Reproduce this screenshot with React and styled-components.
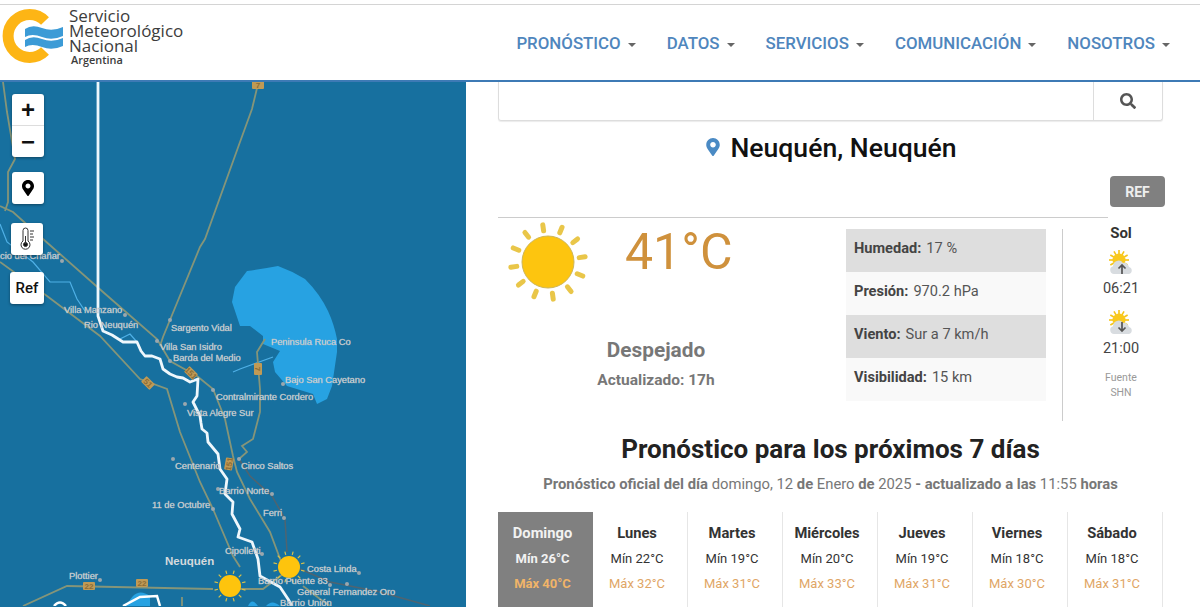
import React from "react"
import styled, { createGlobalStyle } from "styled-components"
import { FaMapMarkerAlt, FaSearch } from "react-icons/fa"

const NAV_ITEMS = ["PRONÓSTICO", "DATOS", "SERVICIOS", "COMUNICACIÓN", "NOSOTROS"]

const FORECAST = [
  { day: "Domingo", min: 26, max: 40, today: true },
  { day: "Lunes", min: 22, max: 32 },
  { day: "Martes", min: 19, max: 31 },
  { day: "Miércoles", min: 20, max: 33 },
  { day: "Jueves", min: 19, max: 31 },
  { day: "Viernes", min: 18, max: 30 },
  { day: "Sábado", min: 18, max: 31 },
]

const STATS = [
  ["Humedad:", "17 %"],
  ["Presión:", "970.2 hPa"],
  ["Viento:", "Sur a 7 km/h"],
  ["Visibilidad:", "15 km"],
]

const MAP_LABELS = [
  ["cio del Chañar", 0, 260],
  ["Villa Manzano", 64, 314],
  ["Rio Neuquén", 84, 329],
  ["Sargento Vidal", 171, 332],
  ["Villa San Isidro", 160, 351],
  ["Barda del Medio", 173, 362],
  ["Peninsula Ruca Co", 271, 346],
  ["Bajo San Cayetano", 285, 384],
  ["Contralmirante Cordero", 216, 401],
  ["Vista Alegre Sur", 187, 417],
  ["Centenario", 175, 470],
  ["Cinco Saltos", 241, 470],
  ["Barrio Norte", 219, 495],
  ["11 de Octubre", 152, 509],
  ["Ferri", 263, 517],
  ["Cipolletti", 225, 555],
  ["Costa Linda", 307, 573],
  ["Plottier", 69, 580],
  ["Barrio Puente 83", 258, 585],
  ["General Fernandez Oro", 297, 596],
  ["Barrio Unión", 280, 607],
]

const MAP_DOTS = [
  [62, 262], [125, 316], [170, 321], [157, 342], [170, 362], [283, 385], [213, 391],
  [185, 405], [173, 460], [239, 460], [218, 490], [272, 495], [213, 510], [284, 519],
  [262, 555], [359, 574], [100, 581], [330, 586], [347, 585],
]

const OLIVE_ROADS = [
  "M258 85 L252 110 L240 143 L205 240 L200 248 L163 338 L160 347",
  "M3 83 L7 113 L15 160 L8 173 L8 203 L5 212",
  "M0 207 L13 213 L43 240 L103 293 L157 340 L170 362 L197 377 L213 390 L225 420 L233 457 L237 473 L250 500 L270 533 L282 565",
  "M0 263 L47 297 L100 337 L140 380 L167 390 L180 433 L200 483 L213 510 L233 557 L240 568",
  "M265 340 L257 353 L260 390 L260 413 L253 440 L242 447 L247 453 L239 460",
  "M23 607 L67 587 L213 590 M240 590 L263 590 L283 575",
  "M303 587 L320 600 L330 607",
  "M182 598 L182 607",
]

const DARK_ROADS = [
  "M239 460 L250 477 L272 497 L285 520 L287 553",
  "M300 570 L330 583 L380 593 L430 607",
]

const WHITE_RIVER =
  "M98 82 L98 317 L103 332 L112 336 L123 343 L137 343 L141 352 L145 357 L152 357 L160 360 L163 370 L170 375 L177 378 L183 379 L190 383 L198 380 L197 397 L193 403 L200 417 L201 424 L202 430 L207 434 L208 443 L218 455 L220 470 L227 480 L225 495 L233 503 L232 515 L240 530 L238 538 L252 543 L258 560 L260 577 L280 588 L288 600 L292 607"

const BLUE_RIVERS = [
  "M0 225 L7 243 L33 263 L50 283 L70 283 L77 300 L85 312",
  "M233 373 L240 370 L273 358",
  "M120 340 L130 335 L137 343",
]

const SHIELDS = [
  ["22", 89, 587, 0],
  ["22", 142, 584, 0],
  ["151", 229, 465, -80],
  ["151", 191, 374, 45],
  ["51", 148, 384, 45],
  ["7", 258, 370, 90],
  ["7", 258, 86, 0],
]

const SUN_RAYS = [0, 1, 2, 3, 4, 5, 6, 7, 8, 9, 10, 11]

export default function App() {
  return (
    <Page>
      <GlobalStyle />
      <TopStrip />
      <Header>
        <Brand>
          <LogoMark />
          <BrandText>
            <BrandName>Servicio</BrandName>
            <BrandName>Meteorológico</BrandName>
            <BrandName>Nacional</BrandName>
            <BrandCountry>Argentina</BrandCountry>
          </BrandText>
        </Brand>
        <Nav>
          {NAV_ITEMS.map((item) => (
            <NavItem key={item}>
              {item}
              <Caret />
            </NavItem>
          ))}
        </Nav>
      </Header>
      <Main>
        <MapPanel>
          <MapDrawing />
          <MapControls>
            <ZoomGroup>
              <ZoomButton>+</ZoomButton>
              <ZoomButton>−</ZoomButton>
            </ZoomGroup>
            <MapButton $top={15}>
              <FaMapMarkerAlt size={16} color="#000" />
            </MapButton>
            <MapButton $top={19} $left={-1}>
              <ThermometerIcon />
            </MapButton>
            <MapButton $top={17} $left={-2} $wide>
              Ref
            </MapButton>
          </MapControls>
        </MapPanel>
        <Content>
          <SearchBar>
            <SearchInput />
            <SearchButton>
              <FaSearch size={16} color="#555" />
            </SearchButton>
          </SearchBar>
          <CityTitle>
            <FaMapMarkerAlt size={18} color="#4a8ac4" />
            Neuquén, Neuquén
          </CityTitle>
          <RefRow>
            <RefButton>REF</RefButton>
          </RefRow>
          <Rule />
          <Current>
            <Summary>
              <SummaryTop>
                <BigSun />
                <Temperature>41°C</Temperature>
              </SummaryTop>
              <Condition>Despejado</Condition>
              <Updated>Actualizado: 17h</Updated>
            </Summary>
            <Stats>
              {STATS.map(([label, value], i) => (
                <StatRow key={label} $shaded={i % 2 === 0}>
                  <b>{label}</b> {value}
                </StatRow>
              ))}
            </Stats>
            <SunColumn>
              <SunTitle>Sol</SunTitle>
              <SunriseIcon />
              <SunTime>06:21</SunTime>
              <SunriseIcon $down />
              <SunTime>21:00</SunTime>
              <Source>
                Fuente
                <br />
                SHN
              </Source>
            </SunColumn>
          </Current>
          <ForecastTitle>Pronóstico para los próximos 7 días</ForecastTitle>
          <ForecastNote>
            <b>Pronóstico oficial del día</b> domingo, 12 <b>de</b> Enero <b>de</b> 2025{" "}
            <b>- actualizado a las</b> 11:55 <b>horas</b>
          </ForecastNote>
          <Days>
            {FORECAST.map((f) => (
              <Day key={f.day} $today={f.today}>
                <DayName>{f.day}</DayName>
                <DayMin>Mín {f.min}°C</DayMin>
                <DayMax $today={f.today}>Máx {f.max}°C</DayMax>
              </Day>
            ))}
          </Days>
        </Content>
      </Main>
    </Page>
  )
}

function LogoMark() {
  return (
    <svg width="66" height="62" viewBox="0 0 66 62">
      <path d="M45 16 A21.5 21.5 0 1 0 45 46" fill="none" stroke="#fdb515" strokeWidth="11" />
      <path d="M25 24 Q32 19 42 23 Q52 27 63 22 L63 31 Q52 36 42 32 Q32 28 25 32 Z" fill="#3c9bd6" />
      <path d="M25 35 Q32 30 42 34 Q52 38 63 33 L63 41 Q52 46 42 42 Q32 38 25 42 Z" fill="#3c9bd6" />
    </svg>
  )
}

function ThermometerIcon() {
  return (
    <svg width="20" height="24" viewBox="0 0 20 24" fill="none" stroke="#333" strokeWidth="1">
      <path d="M6 3.5a2.5 2.5 0 0 1 5 0V14a4.5 4.5 0 1 1-5 0Z" />
      <circle cx="8.5" cy="17.5" r="2" fill="#111" />
      <path d="M8.5 17V9M13 4h4M13 7h3M13 10h4M13 13h3" />
    </svg>
  )
}

function BigSun() {
  return (
    <svg width="80" height="80" viewBox="0 0 80 80">
      {SUN_RAYS.map((i) => (
        <rect key={i} x="37.5" y="0" width="5" height="11" rx="2.5" fill="#e9c649" transform={`rotate(${i * 30 - 8} 40 40)`} />
      ))}
      <circle cx="40" cy="40" r="26" fill="#fdc50f" stroke="#cdb65a" strokeWidth="1" />
    </svg>
  )
}

function SunriseIcon({ $down }) {
  return (
    <SunriseSvg viewBox="0 0 26 26">
      {SUN_RAYS.map((i) => (
        <rect key={i} x="10.2" y="0" width="1.6" height="4" fill="#f5c518" transform={`rotate(${i * 30} 11 10)`} />
      ))}
      <circle cx="11" cy="10" r="6.5" fill="#f9c91e" />
      <path d="M6 24a4 4 0 0 1-1-7.8A5.5 5.5 0 0 1 15 13a5 5 0 0 1 6 4 3.6 3.6 0 0 1 0 7Z" fill="#d8dce0" />
      {$down ? (
        <path d="M14 12v9M10.5 17.5l3.5 3.5 3.5-3.5" fill="none" stroke="#555" strokeWidth="1.7" />
      ) : (
        <path d="M14 24v-9M10.5 18.5l3.5-3.5 3.5 3.5" fill="none" stroke="#555" strokeWidth="1.7" />
      )}
    </SunriseSvg>
  )
}

function MapSun({ cx, cy }) {
  return (
    <g>
      {SUN_RAYS.map((i) => (
        <rect key={i} x={cx - 0.6} y={cy - 16} width="1.2" height="3.5" fill="#d9c24a" transform={`rotate(${i * 30 + 15} ${cx} ${cy})`} />
      ))}
      <circle cx={cx} cy={cy} r="11" fill="#fec40d" />
    </g>
  )
}

function MapDrawing() {
  return (
    <MapSvg viewBox="0 83 466 524" preserveAspectRatio="xMinYMin slice">
      <path
        d="M247 272 Q262 270 278 267 Q292 272 305 280 Q320 295 328 312 Q334 325 337 340 L337 353 L332 387 L327 400 L317 405 L313 395 L287 387 L275 373 L273 363 L280 352 L263 345 L263 337 L250 327 L240 327 L232 303 L235 288 Z"
        fill="#27a2e2"
      />
      <path d="M133 597 Q140 590 150 597 L150 607 L125 607 Z M248 607 Q252 598 258 607 Z M266 607 Q272 600 280 607 Z" fill="#27a2e2" />
      {BLUE_RIVERS.map((d) => (
        <path key={d} d={d} fill="none" stroke="#4fb0e6" strokeWidth="1.2" />
      ))}
      {DARK_ROADS.map((d) => (
        <path key={d} d={d} fill="none" stroke="#4f6470" strokeWidth="1.5" />
      ))}
      {OLIVE_ROADS.map((d) => (
        <path key={d} d={d} fill="none" stroke="#859579" strokeWidth="1.8" />
      ))}
      <path d={WHITE_RIVER} fill="none" stroke="#eef7fc" strokeWidth="2.8" strokeLinejoin="round" />
      <path d="M123 607 L140 598 L157 597 L160 607 M54 607 Q60 600 66 607" fill="none" stroke="#fff" strokeWidth="2.5" />
      {MAP_DOTS.map(([x, y]) => (
        <circle key={`${x}-${y}`} cx={x} cy={y} r="2" fill="#9aa7ae" />
      ))}
      {SHIELDS.map(([text, x, y, angle]) => (
        <g key={`${text}-${x}`} transform={`rotate(${angle} ${x} ${y})`}>
          <rect x={x - 6} y={y - 4} width="12" height="8" rx="1" fill="#c09a55" />
          <ShieldText x={x} y={y + 3}>
            {text}
          </ShieldText>
        </g>
      ))}
      <MapSun cx={230} cy={587} />
      <MapSun cx={289} cy={568} />
      {MAP_LABELS.map(([text, x, y]) => (
        <MapLabel key={text} x={x} y={y}>
          {text}
        </MapLabel>
      ))}
      <CityLabel x="165" y="566">
        Neuquén
      </CityLabel>
    </MapSvg>
  )
}

const GlobalStyle = createGlobalStyle`
  html, body {
    margin: 0;
    padding: 0;
    background: #fff;
    font-family: Roboto, "Liberation Sans", sans-serif;
  }
`

const Page = styled.div`
  width: 1200px;
  height: 607px;
  overflow: hidden;
  background: #fff;
`

const TopStrip = styled.div`
  height: 4px;
  border-bottom: 1px solid #d4d4d4;
`

const Header = styled.header`
  height: 75px;
  display: flex;
  align-items: flex-start;
  justify-content: space-between;
  border-bottom: 2px solid #3d7ab5;
`

const Brand = styled.div`
  display: flex;
  width: 190px;
`

const BrandText = styled.div`
  margin-left: 3px;
  padding-top: 3px;
  color: #3c3c3c;
`

const BrandName = styled.div`
  font-family: "Open Sans", sans-serif;
  font-size: 17px;
  line-height: 15px;
`

const BrandCountry = styled.div`
  font-family: "Open Sans", sans-serif;
  font-size: 10.9px;
  line-height: 13px;
  font-weight: 600;
  margin-left: 2px;
`

const Nav = styled.nav`
  display: flex;
  gap: 31px;
  padding: 29px 30px 0 0;
`

const NavItem = styled.div`
  display: flex;
  align-items: center;
  font-size: 16.85px;
  font-weight: 500;
  line-height: 19px;
  color: #4f86bd;
`

const Caret = styled.span`
  margin-left: 7px;
  margin-top: 2px;
  border-top: 4px solid #666;
  border-left: 4px solid transparent;
  border-right: 4px solid transparent;
`

const Main = styled.main`
  display: flex;
  height: 526px;
`

const MapPanel = styled.section`
  position: relative;
  flex: 0 0 466px;
  height: 100%;
  background: #17709f;
  overflow: hidden;
`

const MapSvg = styled.svg`
  display: block;
  width: 466px;
  height: 524px;
`

const MapLabel = styled.text`
  font-family: "Liberation Sans", sans-serif;
  font-size: 9.3px;
  fill: #eeeeee;
  stroke: #a8b2b8;
  stroke-width: 0.3px;
`

const CityLabel = styled.text`
  font-family: "Liberation Sans", sans-serif;
  font-size: 11.5px;
  font-weight: 700;
  fill: #d5dadd;
`

const ShieldText = styled.text`
  font-family: "Liberation Sans", sans-serif;
  font-size: 8px;
  font-weight: 700;
  text-anchor: middle;
  fill: #8c6d35;
`

const MapControls = styled.div`
  position: absolute;
  left: 12px;
  top: 12px;
  display: flex;
  flex-direction: column;
  align-items: flex-start;
`

const ZoomGroup = styled.div`
  width: 32px;
  background: #fff;
  border-radius: 3px;
  overflow: hidden;
  box-shadow: 0 1px 3px rgba(0, 0, 0, 0.4);
`

const ZoomButton = styled.div`
  height: 31px;
  display: flex;
  align-items: center;
  justify-content: center;
  font-family: "Liberation Sans", sans-serif;
  font-size: 24px;
  font-weight: 700;
  color: #111;

  & + & {
    border-top: 1px solid #ddd;
  }
`

const MapButton = styled.div`
  width: ${(p) => (p.$wide ? "34px" : "32px")};
  height: 32px;
  margin-top: ${(p) => p.$top}px;
  margin-left: ${(p) => p.$left || 0}px;
  display: flex;
  align-items: center;
  justify-content: center;
  background: #fff;
  border-radius: 3px;
  box-shadow: 0 1px 3px rgba(0, 0, 0, 0.4);
  font-size: 15px;
  font-weight: 500;
  color: #111;
`

const Content = styled.section`
  flex: 0 0 665px;
  margin-left: 32px;
`

const SearchBar = styled.div`
  display: flex;
  height: 38px;
  border: 1px solid #ddd;
  border-top: none;
  border-radius: 0 0 3px 3px;
  box-shadow: 0 1px 1px rgba(0, 0, 0, 0.08);
`

const SearchInput = styled.div`
  flex: 1;
`

const SearchButton = styled.div`
  flex: 0 0 68px;
  display: flex;
  align-items: center;
  justify-content: center;
  border-left: 1px solid #ddd;
`

const CityTitle = styled.h2`
  margin: 10px 0 0;
  height: 32px;
  display: flex;
  align-items: center;
  justify-content: center;
  gap: 8px;
  font-size: 26.6px;
  font-weight: 500;
  color: #111;
`

const RefRow = styled.div`
  display: flex;
  justify-content: flex-end;
  margin: 13px -2px 0 0;
`

const RefButton = styled.div`
  width: 55px;
  height: 31px;
  display: flex;
  align-items: center;
  justify-content: center;
  background: #808080;
  border-radius: 4px;
  font-size: 14px;
  font-weight: 700;
  color: #eee;
`

const Rule = styled.div`
  width: 610px;
  margin-top: 10px;
  border-top: 1px solid #ccc;
`

const Current = styled.div`
  display: flex;
  margin-top: 11px;
  height: 192px;
`

const Summary = styled.div`
  flex: 0 0 316px;
  margin-right: 32px;
  margin-top: -7px;
`

const SummaryTop = styled.div`
  display: flex;
  align-items: flex-start;
  gap: 37px;
  padding-left: 10px;
  height: 108px;
`

const Temperature = styled.div`
  font-size: 50px;
  line-height: 60px;
  color: #cf913c;
`

const Condition = styled.div`
  text-align: center;
  font-size: 20.8px;
  font-weight: 700;
  line-height: 24px;
  color: #777;
  margin-top: 8px;
`

const Updated = styled.div`
  text-align: center;
  font-size: 15.5px;
  font-weight: 700;
  line-height: 17px;
  color: #777;
  margin-top: 10px;
`

const Stats = styled.div`
  flex: 0 0 200px;
  align-self: flex-start;
`

const StatRow = styled.div`
  height: 43px;
  display: flex;
  align-items: center;
  gap: 5px;
  padding: 0 0 6px 8px;
  box-sizing: border-box;
  background: ${(p) => (p.$shaded ? "#dedede" : "#f9f9f9")};
  font-size: 14.6px;
  color: #555;

  b {
    font-weight: 700;
    color: #444;
  }
`

const SunColumn = styled.div`
  flex: 0 0 117px;
  margin-left: 16px;
  border-left: 1px solid #ccc;
  display: flex;
  flex-direction: column;
  align-items: center;
  box-sizing: border-box;
  margin-right: -62px;
`

const SunTitle = styled.div`
  font-size: 15px;
  font-weight: 700;
  line-height: 17px;
  color: #333;
  margin: -4px 0 8px;
`

const SunriseSvg = styled.svg`
  display: block;
  width: 26px;
  height: 26px;
`

const SunTime = styled.div`
  font-size: 14.5px;
  line-height: 17px;
  margin: 4px 0 13px;
  color: #444;
`

const Source = styled.div`
  font-size: 10.5px;
  line-height: 15px;
  text-align: center;
  color: #999;
`

const ForecastTitle = styled.h2`
  margin: 12px 0 0;
  text-align: center;
  font-size: 26px;
  line-height: 32px;
  font-weight: 700;
  color: #222;
`

const ForecastNote = styled.p`
  margin: 11px 0 0;
  text-align: center;
  font-size: 14.8px;
  line-height: 17px;
  color: #777;
`

const Days = styled.div`
  display: grid;
  grid-template-columns: repeat(7, 1fr);
  margin-top: 19px;
`

const Day = styled.div`
  height: 95px;
  box-sizing: border-box;
  padding: 13px 6px 0 0;
  text-align: center;
  background: ${(p) => (p.$today ? "#808080" : "#fff")};
  border-right: ${(p) => (p.$today ? "none" : "1px solid #e6e6e6")};
  font-weight: ${(p) => (p.$today ? 700 : 400)};
  color: ${(p) => (p.$today ? "#f2f2f2" : "#333")};
`

const DayName = styled.div`
  font-size: 14.7px;
  font-weight: 700;
  line-height: 17px;
`

const DayMin = styled.div`
  font-size: 13px;
  line-height: 15px;
  margin-top: 9px;
`

const DayMax = styled.div`
  font-size: 13px;
  line-height: 15px;
  margin-top: 10px;
  color: ${(p) => (p.$today ? "#f0b468" : "#dfa666")};
`
